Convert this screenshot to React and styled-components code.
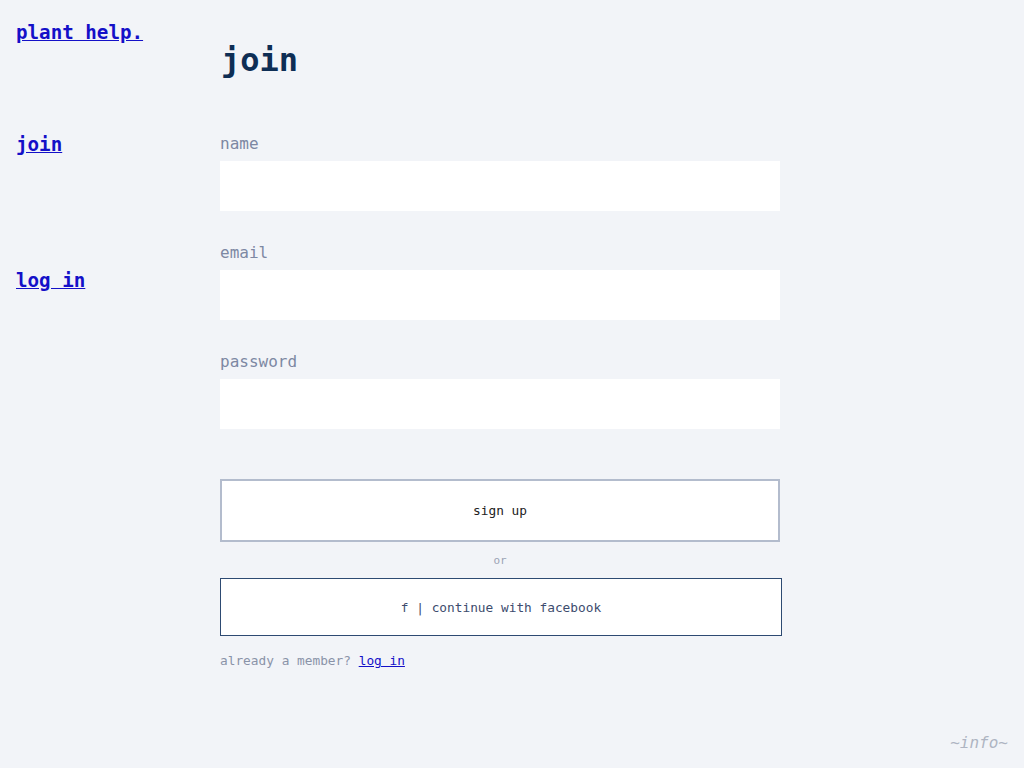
import styled, { createGlobalStyle } from "styled-components"

const GlobalStyle = createGlobalStyle`
  html, body {
    margin: 0;
    background: #f2f4f8;
  }
  body {
    font-family: "DejaVu Sans Mono", monospace;
  }
`

const Page = styled.div`
  display: flex;
  min-height: 768px;
  position: relative;
`

const Sidebar = styled.nav`
  width: 204px;
  padding: 21px 0 0 16px;
  display: flex;
  flex-direction: column;
  align-items: flex-start;
`

const NavLink = styled.a`
  font-family: "DejaVu Sans Mono", monospace;
  font-weight: bold;
  font-size: 19.2px;
  line-height: 24px;
  color: #1410c8;
  text-decoration: underline;
  margin-top: ${(props) => props.$gap || 0}px;
`

const Main = styled.main`
  width: 562px;
  padding-top: 41px;
`

const Title = styled.h1`
  margin: 0 0 0 1px;
  font-size: 32px;
  line-height: 38px;
  font-weight: bold;
  color: #0e2e55;
`

const Field = styled.div`
  display: flex;
  flex-direction: column;
  width: 560px;
  margin-top: ${(props) => props.$top}px;
`

const Label = styled.label`
  font-size: 16px;
  line-height: 19px;
  color: #7d88a3;
  margin-bottom: 8px;
`

const Input = styled.input`
  height: 50px;
  border: none;
  background: #fff;
  outline: none;
  padding: 0 12px;
  font-family: inherit;
  font-size: 16px;
`

const ButtonRow = styled.div`
  margin-top: 50px;
`

const Button = styled.button`
  display: block;
  width: ${(props) => props.$width}px;
  height: ${(props) => props.$height}px;
  background: #fff;
  border: ${(props) => props.$border};
  font-family: "DejaVu Sans Mono", monospace;
  font-size: 12.8px;
  color: ${(props) => props.$color};
  cursor: pointer;
  padding: 0;
`

const Or = styled.div`
  width: 560px;
  text-align: center;
  font-size: 11px;
  line-height: 13px;
  color: #9aa2b4;
  margin: 12px 0 11px;
`

const Member = styled.p`
  margin: 17px 0 0;
  font-size: 12.8px;
  line-height: 16px;
  color: #8a93a8;

  a {
    color: #1410c8;
  }
`

const Info = styled.div`
  position: absolute;
  right: 16px;
  bottom: 16px;
  font-size: 16px;
  font-style: italic;
  color: #aeb4c2;
`

export default function App() {
  return (
    <>
      <GlobalStyle />
      <Page>
        <Sidebar>
          <NavLink href="#">plant help.</NavLink>
          <NavLink href="#" $gap={88}>join</NavLink>
          <NavLink href="#" $gap={112}>log in</NavLink>
        </Sidebar>
        <Main>
          <Title>join</Title>
          <Field $top={55}>
            <Label>name</Label>
            <Input type="text" />
          </Field>
          <Field $top={32}>
            <Label>email</Label>
            <Input type="email" />
          </Field>
          <Field $top={32}>
            <Label>password</Label>
            <Input type="password" />
          </Field>
          <ButtonRow>
            <Button $width={560} $height={63} $border="2px solid #b3bccd" $color="#222">
              sign up
            </Button>
          </ButtonRow>
          <Or>or</Or>
          <Button $width={562} $height={58} $border="1px solid #2d4a72" $color="#3d4c6e">
            f | continue with facebook
          </Button>
          <Member>
            already a member? <a href="#">log in</a>
          </Member>
        </Main>
        <Info>~info~</Info>
      </Page>
    </>
  )
}
